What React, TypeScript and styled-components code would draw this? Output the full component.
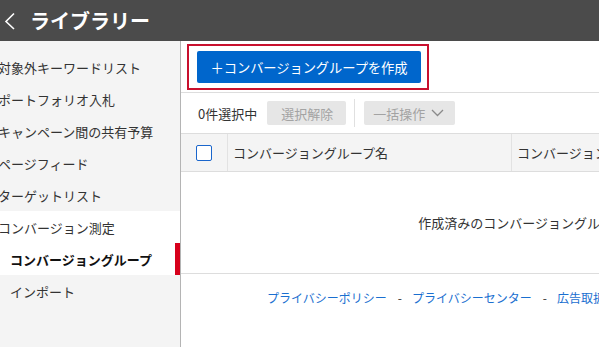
import React from "react";
import styled, { createGlobalStyle } from "styled-components";

const Global = createGlobalStyle`
  html, body { margin: 0; padding: 0; overflow: hidden; background: #fff; }
  body { font-family: "Noto Sans CJK JP", "Noto Sans", sans-serif; color: #333; }
  * { box-sizing: border-box; }
`;

const Page = styled.div`
  width: 599px;
  height: 347px;
  display: flex;
  flex-direction: column;
  overflow: hidden;
`;

const Header = styled.header`
  height: 41px;
  flex: none;
  background: #4b4b4b;
  display: flex;
  align-items: center;
  gap: 14px;
  padding-left: 4px;
`;

const Title = styled.h1`
  margin: 0;
  font-size: 20px;
  font-weight: 700;
  color: #fff;
  line-height: 1;
`;

const Body = styled.div`
  flex: 1;
  display: flex;
  min-height: 0;
`;

const Sidebar = styled.nav`
  width: 181px;
  flex: none;
  background: #f4f4f4;
  border-right: 1px solid #b4b4b4;
  padding-top: 10px;
  display: flex;
  flex-direction: column;
`;

const NavItem = styled.div<{ $sub?: boolean; $open?: boolean; $active?: boolean }>`
  position: relative;
  height: 32px;
  display: flex;
  align-items: center;
  padding-left: ${(p) => (p.$sub ? "10px" : "0")};
  margin-left: ${(p) => (p.$sub ? "0" : "-2px")};
  font-size: 13px;
  font-weight: ${(p) => (p.$active ? 700 : 400)};
  color: ${(p) => (p.$active ? "#111" : "#333")};
  background: ${(p) => (p.$open ? "#fff" : "transparent")};
  white-space: nowrap;
  &::after {
    content: "";
    display: ${(p) => (p.$active ? "block" : "none")};
    position: absolute;
    right: 0;
    top: 0;
    bottom: 0;
    width: 5px;
    background: #d7001b;
  }
`;

const Main = styled.main`
  flex: 1;
  min-width: 0;
  overflow: hidden;
  display: flex;
  flex-direction: column;
`;

const Inner = styled.div`
  width: 772px;
  display: flex;
  flex-direction: column;
`;

const ActionBar = styled.div`
  padding: 3px 0 2px 6px;
  border-bottom: 1px solid #ddd;
`;

const Highlight = styled.div`
  display: inline-flex;
  border: 2px solid #c8102e;
  padding: 5px 6px 5px 8px;
`;

const PrimaryButton = styled.button`
  height: 32px;
  width: 224px;
  border: none;
  border-radius: 2px;
  background: #0066cc;
  color: #fff;
  font-family: inherit;
  font-size: 13.3px;
  padding: 0;
  display: flex;
  align-items: center;
  justify-content: center;
  letter-spacing: -0.1px;
`;

const Toolbar = styled.div`
  height: 40px;
  display: flex;
  align-items: center;
  padding-left: 17px;
  font-size: 13px;
`;

const Count = styled.span`
  margin-right: 10px;
`;

const GhostButton = styled.button<{ $menu?: boolean }>`
  height: 24px;
  border: none;
  border-radius: 2px;
  background: #e6e6e6;
  color: #a3a3a3;
  font-family: inherit;
  font-size: 13px;
  padding: ${(p) => (p.$menu ? "0 11px 0 9px" : "0 13px 0 14px")};
  display: flex;
  align-items: center;
  gap: 6px;
`;

const VSep = styled.span`
  width: 1px;
  height: 28px;
  background: #e0e0e0;
  margin: 0 9px 0 8px;
`;

const HeadRow = styled.div`
  height: 39px;
  display: flex;
  background: #f4f4f4;
  border-top: 1px solid #ddd;
  border-bottom: 1px solid #ddd;
  font-size: 13px;
`;

const HeadCell = styled.div<{ $w?: number }>`
  width: ${(p) => (p.$w ? `${p.$w}px` : "auto")};
  flex: ${(p) => (p.$w ? "none" : "1")};
  display: flex;
  align-items: center;
  padding-left: 5px;
  border-right: 1px solid #e2e2e2;
  white-space: nowrap;
`;

const CheckCell = styled.div`
  width: 47px;
  flex: none;
  display: flex;
  align-items: center;
  padding-left: 15px;
  border-right: 1px solid #e2e2e2;
`;

const Checkbox = styled.span`
  width: 16px;
  height: 16px;
  border: 1.5px solid #1a66cc;
  border-radius: 2px;
  background: #fff;
`;

const Empty = styled.div`
  height: 102px;
  display: flex;
  align-items: center;
  justify-content: center;
  font-size: 13px;
  color: #333;
  border-bottom: 1px solid #ddd;
`;

const Footer = styled.footer`
  height: 46px;
  display: flex;
  align-items: center;
  padding-left: 86px;
  font-size: 12px;
  white-space: nowrap;
`;

const Link = styled.a`
  color: #1a6fd0;
  text-decoration: none;
`;

const Dash = styled.span`
  color: #333;
  margin: 0 10px 0 11px;
`;

const nav = [
  "対象外キーワードリスト",
  "ポートフォリオ入札",
  "キャンペーン間の共有予算",
  "ページフィード",
  "ターゲットリスト",
];

export default function App() {
  return (
    <Page>
      <Global />
      <Header>
        <svg width="12" height="18" viewBox="0 0 12 18" fill="none">
          <path d="M10 1.5L2 9.5L10 17" stroke="#fff" strokeWidth="1.6" />
        </svg>
        <Title>ライブラリー</Title>
      </Header>
      <Body>
        <Sidebar>
          {nav.map((n) => (
            <NavItem key={n}>{n}</NavItem>
          ))}
          <NavItem $open>コンバージョン測定</NavItem>
          <NavItem $open $sub $active>
            コンバージョングループ
          </NavItem>
          <NavItem $sub>インポート</NavItem>
        </Sidebar>
        <Main>
          <Inner>
            <ActionBar>
              <Highlight>
                <PrimaryButton>＋コンバージョングループを作成</PrimaryButton>
              </Highlight>
            </ActionBar>
            <Toolbar>
              <Count>0件選択中</Count>
              <GhostButton>選択解除</GhostButton>
              <VSep />
              <GhostButton $menu>
                一括操作
                <svg width="13" height="8" viewBox="0 0 13 8" fill="none">
                  <path d="M1 1l5.5 5.5L12 1" stroke="#8a8a8a" strokeWidth="1.3" />
                </svg>
              </GhostButton>
            </Toolbar>
            <HeadRow>
              <CheckCell>
                <Checkbox />
              </CheckCell>
              <HeadCell $w={284}>コンバージョングループ名</HeadCell>
              <HeadCell>コンバージョン</HeadCell>
            </HeadRow>
            <Empty>作成済みのコンバージョングループはありません。</Empty>
            <Footer>
              <Link>プライバシーポリシー</Link>
              <Dash>-</Dash>
              <Link>プライバシーセンター</Link>
              <Dash>-</Dash>
              <Link>広告取扱基本規定</Link>
            </Footer>
          </Inner>
        </Main>
      </Body>
    </Page>
  );
}
